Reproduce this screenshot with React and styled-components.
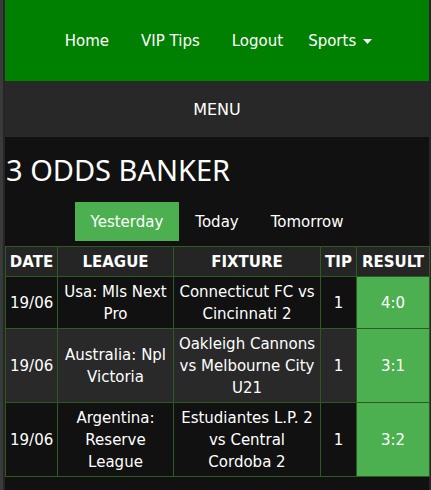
import React from "react";
import styled, { createGlobalStyle } from "styled-components";

//Page wide reset and dark body
const GlobalStyle = createGlobalStyle`
  html, body {
    margin: 0;
    padding: 0;
  }
  body {
    background-color: #262626;
    border-left: 3px solid #3a3a3a;
    font-family: "DejaVu Sans", Verdana, sans-serif;
    color: #ffffff;
  }
`;

const tips = [
  { date: "19/06", league: "Usa: Mls Next Pro", fixture: "Connecticut FC vs Cincinnati 2", tip: "1", result: "4:0" },
  { date: "19/06", league: "Australia: Npl Victoria", fixture: "Oakleigh Cannons vs Melbourne City U21", tip: "1", result: "3:1" },
  { date: "19/06", league: "Argentina: Reserve League", fixture: "Estudiantes L.P. 2 vs Central Cordoba 2", tip: "1", result: "3:2" },
];

const days = ["Yesterday", "Today", "Tomorrow"];

//Returns the banker tips page
export default function App() {
  return (
    <>
      <GlobalStyle />
      <Page>
        <Navbar>
          <NavLink>Home</NavLink>
          <NavLink>VIP Tips</NavLink>
          <NavLink>Logout</NavLink>
          <Dropdown>
            Sports
            <Caret width="9" height="5" viewBox="0 0 9 5">
              <path d="M0 0h9L4.5 5z" fill="#ffffff" />
            </Caret>
          </Dropdown>
        </Navbar>
        <MenuBar>MENU</MenuBar>
        <Content>
          <Title>3 ODDS BANKER</Title>
          <Tabs>
            {days.map((d) => (
              <Tab key={d} active={d === "Yesterday"}>
                {d}
              </Tab>
            ))}
          </Tabs>
          <Table>
            <colgroup>
              <col style={{ width: 52 }} />
              <col style={{ width: 116 }} />
              <col style={{ width: 147 }} />
              <col style={{ width: 36 }} />
              <col style={{ width: 73 }} />
            </colgroup>
            <thead>
              <tr>
                <Th>DATE</Th>
                <Th>LEAGUE</Th>
                <Th>FIXTURE</Th>
                <Th>TIP</Th>
                <Th>RESULT</Th>
              </tr>
            </thead>
            <tbody>
              {tips.map((t, i) => (
                <Row key={i} striped={i % 2 === 1}>
                  <Td>{t.date}</Td>
                  <Td>{t.league}</Td>
                  <Td>{t.fixture}</Td>
                  <Td>{t.tip}</Td>
                  <Td won>{t.result}</Td>
                </Row>
              ))}
            </tbody>
          </Table>
        </Content>
      </Page>
    </>
  );
}

//CSS
const Page = styled.div`
  margin: 0 2px 0 2px;
  min-height: 490px;
  background-color: #111111;
`;

const Navbar = styled.nav`
  height: 81px;
  background-color: #008000;
  display: flex;
  align-items: center;
  justify-content: center;
  padding-left: 3px;
  font-size: 15px;
`;

const NavLink = styled.a`
  padding: 0 16px;
  color: #ffffff;
`;

const Dropdown = styled.a`
  display: flex;
  align-items: center;
  gap: 7px;
  padding: 0 16px 0 9px;
  color: #ffffff;
`;

const Caret = styled.svg`
  display: block;
  margin-top: 1px;
`;

const MenuBar = styled.div`
  height: 56px;
  background-color: #282828;
  display: flex;
  align-items: center;
  justify-content: center;
  font-size: 16px;
`;

const Content = styled.main`
  padding-bottom: 12px;
`;

const Title = styled.h2`
  margin: 13px 0 12px 1px;
  font-family: "Noto Sans", sans-serif;
  font-weight: 400;
  font-size: 29px;
  line-height: 40px;
`;

const Tabs = styled.div`
  display: flex;
  justify-content: center;
  margin-bottom: 5px;
`;

const Tab = styled.button`
  height: 39px;
  padding: 0 16px;
  border: none;
  background-color: ${(p) => (p.active ? "#4caf50" : "transparent")};
  color: #ffffff;
  font-family: "DejaVu Sans", sans-serif;
  font-size: 15px;
`;

const Table = styled.table`
  width: 424px;
  table-layout: fixed;
  border-collapse: collapse;
  font-size: 15px;
  line-height: 22px;
  text-align: center;
`;

const Th = styled.th`
  padding: 4px 0 3px;
  border: 1px solid #2c5a20;
  background-color: #252525;
  font-weight: 700;
`;

const Row = styled.tr`
  background-color: ${(p) => (p.striped ? "#292929" : "#111111")};
`;

const Td = styled.td`
  padding: 4px 4px 3px;
  border: 1px solid #2c5a20;
  background-color: ${(p) => (p.won ? "#4caf50" : "transparent")};
`;
